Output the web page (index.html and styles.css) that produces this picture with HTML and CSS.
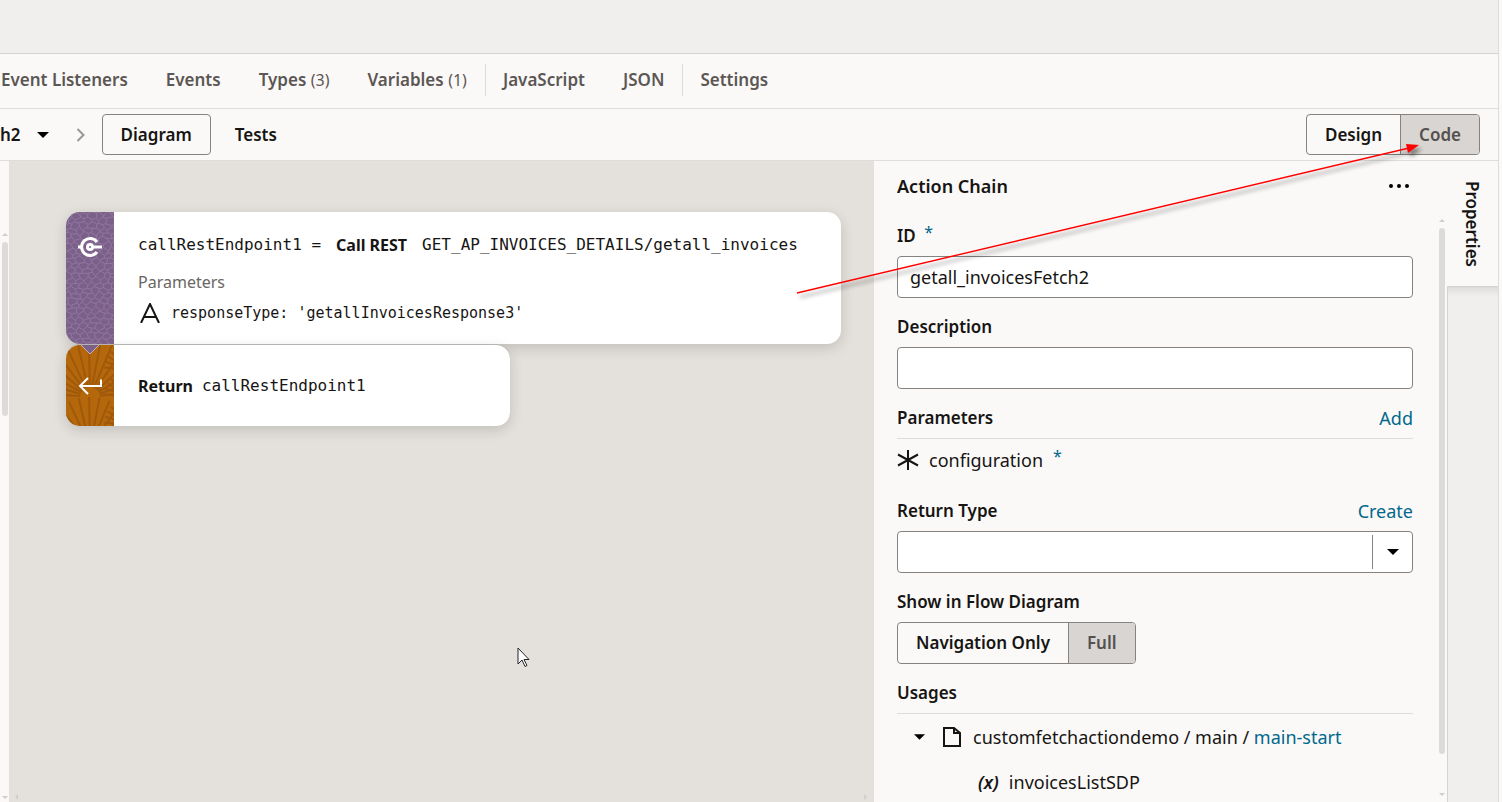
FILE: index.html
```html
<!DOCTYPE html>
<html lang="en">
<head>
<meta charset="utf-8">
<title>Action Chain</title>
<link rel="stylesheet" href="styles.css">
</head>
<body>
<div class="app">
  <header class="topbar"></header>
  <nav class="tabs">
    <a class="tab" href="#">Event Listeners</a>
    <a class="tab" href="#">Events</a>
    <a class="tab" href="#">Types <span class="count">(3)</span></a>
    <a class="tab" href="#">Variables <span class="count">(1)</span></a>
    <span class="divider"></span>
    <a class="tab" href="#">JavaScript</a>
    <a class="tab" href="#">JSON</a>
    <span class="divider"></span>
    <a class="tab" href="#">Settings</a>
  </nav>
  <div class="toolbar">
    <button class="crumb">h2<svg width="12" height="6" viewBox="0 0 12 6"><path d="M0 0h12L6 6z"/></svg></button>
    <svg class="chevron" width="10" height="14" viewBox="0 0 10 14"><path d="M1.500 1l6 6-6 6"/></svg>
    <button class="btn outlined">Diagram</button>
    <button class="btn plain">Tests</button>
    <div class="group mode">
      <button class="btn">Design</button><button class="btn selected">Code</button>
    </div>
  </div>
  <main class="main">
    <div class="gutter">
      <svg class="tri" width="6" height="3" viewBox="0 0 6 3"><path d="M0 3h6L3 0z"/></svg>
      <span class="thumb"></span>
      <svg class="tri end" width="6" height="3" viewBox="0 0 6 3"><path d="M0 0h6L3 3z"/></svg>
    </div>
    <section class="canvas">
      <div class="flow">
        <article class="card rest">
          <div class="strip">
            <svg class="texture" width="48" height="132" id="cells"></svg>
            <svg class="glyph" width="24" height="24" viewBox="0 0 24 24"><path d="M19 7A8.500 8.500 0 1 0 19 17"/><path d="M0 12h4M15 12h9"/><circle cx="12" cy="12" r="2.500"/></svg>
          </div>
          <div class="body">
            <p class="line"><code>callRestEndpoint1 =</code><b>Call REST</b><code>GET_AP_INVOICES_DETAILS/getall_invoices</code></p>
            <p class="sub">Parameters</p>
            <p class="param"><svg width="20" height="20" viewBox="0 0 20 20"><path d="M1 20L10 1l9 19M4 14h12"/></svg><code>responseType: 'getallInvoicesResponse3'</code></p>
          </div>
        </article>
        <article class="card return">
          <div class="strip"><svg class="texture" width="48" height="81" id="fans"></svg>
            <svg class="notch" width="20" height="10" viewBox="0 0 20 10"><path d="M0 -1l10 10L20 -1"/></svg>
            <svg class="glyph" width="24" height="24" viewBox="0 0 24 24"><path d="M23 5.500V12H2M10 4l-8 8 8 8"/></svg>
          </div>
          <div class="body"><p class="line"><b>Return</b><code>callRestEndpoint1</code></p></div>
        </article>
      </div>
      <svg class="pointer" width="13" height="21" viewBox="0 0 13 21"><path d="M1 1v16l4-4 3 6.500 2-1-3-6h5z"/></svg>
      <div class="hscroll"><svg width="3" height="6" viewBox="0 0 3 6"><path d="M3 0v6L0 3z"/></svg><svg width="3" height="6" viewBox="0 0 3 6"><path d="M0 0v6l3-3z"/></svg></div>
    </section>
    <aside class="panel">
      <div class="fields">
        <div class="head"><h2>Action Chain</h2><button class="more" aria-label="More"><svg width="20" height="4" viewBox="0 0 20 4"><circle cx="2" cy="2" r="2"/><circle cx="10" cy="2" r="2"/><circle cx="18" cy="2" r="2"/></svg></button></div>
        <div class="field"><label for="id">ID <span class="req">*</span></label><input id="id" type="text" value="getall_invoicesFetch2"></div>
        <div class="field"><label for="desc">Description</label><input id="desc" type="text"></div>
        <div class="head ruled"><h3>Parameters</h3><a href="#">Add</a></div>
        <p class="config"><svg width="22" height="20" viewBox="0 0 22 20"><path d="M11 0v20M1 4.500l20 11M21 4.500l-20 11"/></svg>configuration <span class="req">*</span></p>
        <div class="field">
          <div class="head"><label for="rt">Return Type</label><a href="#">Create</a></div>
          <div class="select"><select id="rt"><option></option></select><span class="arrow"><svg width="12" height="6" viewBox="0 0 12 6"><path d="M0 0h12L6 6z"/></svg></span></div>
        </div>
        <div class="field"><h3>Show in Flow Diagram</h3><div class="group"><button class="btn">Navigation Only</button><button class="btn selected">Full</button></div></div>
        <div class="head ruled"><h3>Usages</h3></div>
        <p class="tree"><svg width="11" height="6" viewBox="0 0 12 6"><path d="M0 0h12L6 6z"/></svg><svg class="doc" width="18" height="20" viewBox="0 0 18 20"><path d="M1 1h10l6 5v13H1zM11 1v5h6"/></svg><span>customfetchactiondemo / main / <a href="#">main-start</a></span></p>
        <p class="tree leaf"><i>(x)</i>invoicesListSDP</p>
      </div>
      <div class="scroll">
        <svg class="tri" width="6" height="3" viewBox="0 0 6 3"><path d="M0 3h6L3 0z"/></svg>
        <span class="thumb"></span>
        <svg class="tri" width="6" height="3" viewBox="0 0 6 3"><path d="M0 0h6L3 3z"/></svg>
      </div>
    </aside>
    <div class="rail"><button class="vtab">Properties</button><div class="railfill"></div></div>
  </main>
  <svg class="callout" width="640" height="170" viewBox="0 0 640 170"><path class="shaft" d="M7 158L619 13"/><path class="tip" d="M629 10l-11 8-2-9z"/></svg>
</div>
<script src="textures.js"></script>
</body>
</html>
```
FILE: textures.js
```js
// Decorative textures for the action card strips.
var NS = "http://www.w3.org/2000/svg";
function stroke(svg, d, color, width) {
  var p = document.createElementNS(NS, "path");
  p.setAttribute("d", d);
  p.setAttribute("fill", "none");
  p.setAttribute("stroke", color);
  p.setAttribute("stroke-width", width);
  svg.appendChild(p);
}
var seed = 7;
function rnd() { seed = (seed * 16807) % 2147483647; return seed / 2147483647; }

// Irregular honeycomb of small cells with lighter seams.
var cells = document.getElementById("cells"), pts = [], r, c;
for (r = 0; r < 32; r++) {
  pts[r] = [];
  for (c = 0; c < 16; c++) {
    pts[r][c] = [c * 4 - 4 + rnd() * 3, r * 5 - 5 + ((r + c) % 2 ? 1 : -1) + rnd() * 3];
  }
}
var d = "";
for (r = 0; r < 31; r++) for (c = 0; c < 15; c++) {
  d += "M" + pts[r][c] + "L" + pts[r][c + 1];
  if ((r + c) % 2) d += "M" + pts[r][c] + "L" + pts[r + 1][c];
}
stroke(cells, d, "#9177a0", 1);

// Overlapping fans of rays.
var fans = document.getElementById("fans");
[[24, 52, 58], [24, 102, 50], [66, 25, 28], [66, 52, 28], [66, 80, 28]].forEach(function (f) {
  var s = "";
  for (var a = 5; a < 180; a += 12) {
    var t = a * Math.PI / 180;
    s += "M" + (f[0] - Math.cos(t) * 10) + " " + (f[1] - Math.sin(t) * 10) +
         "L" + (f[0] - Math.cos(t) * f[2]) + " " + (f[1] - Math.sin(t) * f[2]);
  }
  stroke(fans, s, "#9f590a", 2);
});
```
FILE: styles.css
```css
* { box-sizing: border-box; }
body { margin: 0; font: 18px/24px "Noto Sans", "Open Sans", sans-serif; color: #161513; background: #fbf9f8; }
h2, h3, p { margin: 0; font-size: 18px; font-weight: 400; }
a { color: #00688c; text-decoration: none; }
button, input, select { font: inherit; color: inherit; }
button { background: none; border: 0; padding: 0; }
code { font-family: "DejaVu Sans Mono", monospace; font-size: 16px; }
.app { position: relative; height: 100vh; display: flex; flex-direction: column; margin-right: 3px; border-right: 1px solid #dddcda; overflow: hidden; }
.topbar { height: 54px; flex: none; background: #f0efed; border-bottom: 1px solid #d5d3d1; }
.tabs { height: 55px; flex: none; display: flex; align-items: center; border-bottom: 1px solid #dfdddb; padding: 0 0 2px 1px; }
.tab, .crumb, .btn, .vtab, h3, label { font-size: 17px; font-weight: 600; }
.tab { color: #5b5754; margin-right: 38px; white-space: nowrap; }
.count { font-size: 16px; font-weight: 400; }
.divider { width: 1px; height: 32px; background: #dddbd9; margin: 0 17px 0 -20px; }
.toolbar { height: 52px; flex: none; display: flex; align-items: center; border-bottom: 1px solid #dfdddb; padding-right: 18px; }
.crumb { display: flex; align-items: center; gap: 16px; }
.chevron { margin: 0 16px 0 27px; fill: none; stroke: #999693; stroke-width: 2; }
.btn { height: 41px; padding: 0 18px; white-space: nowrap; }
.outlined { border: 1px solid #85827f; border-radius: 4px; }
.plain { padding: 0 24px; }
.group { display: flex; align-self: flex-start; width: max-content; border: 1px solid #85827f; border-radius: 4px; overflow: hidden; }
.group .btn { height: 40px; }
.toolbar .group { margin-left: auto; align-self: center; }
.toolbar .group .btn { height: 39px; }
.selected { background: #d9d5d3; color: #55514e; border-left: 1px solid #85827f; }
.main { flex: 1; min-height: 0; display: flex; }
.gutter { width: 9px; flex: none; display: flex; flex-direction: column; align-items: flex-end; padding: 72px 1px 3px 0; }
.tri, .hscroll svg { fill: #d0cecc; flex: none; }
.thumb { width: 6px; background: #dcdbd9; border-radius: 3px; }
.gutter .thumb { height: 174px; margin-top: 6px; }
.gutter .end { margin-top: auto; }
.canvas { position: relative; flex: 1; min-width: 0; background: #e4e1dc; display: flex; flex-direction: column; padding: 51px 0 2px 57px; }
.flow { display: flex; flex-direction: column; align-items: flex-start; }
.card { display: flex; background: #fff; border-radius: 14px; box-shadow: 0 4px 14px rgba(0, 0, 0, .15); }
.rest { min-width: 775px; }
.return { min-width: 444px; margin-top: 1px; box-shadow: 0 4px 14px rgba(0, 0, 0, .15), 0 -1px 0 #bfbbb8; }
.strip { position: relative; width: 48px; flex: none; border-radius: 14px 0 0 14px; overflow: hidden; display: flex; justify-content: center; }
.rest .strip { background: #7b6089; padding-top: 23px; }
.return .strip { background: #b5670c; padding-top: 29px; }
.texture { position: absolute; inset: 0; }
.glyph { position: relative; fill: none; stroke: #fff; stroke-width: 3; }
.return .glyph { stroke-width: 2; }
.notch { position: absolute; top: 0; left: 14px; fill: #7b6089; stroke: #bfb3bd; stroke-width: 1; }
.body { padding: 21px 24px 19px 24px; }
.return .body { padding: 29px 24px 28px; }
.line { display: flex; gap: 15px; white-space: nowrap; }
.return .line { gap: 9px; }
.line b { font-size: 16px; }
.sub { font-size: 16px; color: #6a6663; margin-top: 13px; }
.param { display: flex; align-items: center; gap: 11px; margin: 7px 0 0 2px; height: 24px; }
.param code { font-size: 15px; }
.param svg, .config svg, .doc { fill: none; stroke: #161513; stroke-width: 2; }
.hscroll { margin-top: auto; display: flex; justify-content: space-between; padding: 0 7px 0 0; margin-left: -51px; }
.pointer { position: absolute; left: 508px; top: 486px; fill: #fff; stroke: #25242b; }
.panel { width: 573px; flex: none; display: flex; }
.fields { flex: 1; padding: 13px 0 0 23px; display: flex; flex-direction: column; }
.head { display: flex; justify-content: space-between; align-items: center; }
h3, label { display: block; }
h2 { font-weight: 600; }
.more { display: flex; padding: 4px; }
.field { display: flex; flex-direction: column; gap: 8px; }
.head + .field { margin-top: 26px; }
.field + .field { margin-top: 17px; }
.req { color: #00688c; font-weight: 400; font-size: 16px; position: relative; top: -4px; margin-left: 4px; }
input, select { height: 42px; width: 100%; background: #fff; border: 1px solid #85827f; border-radius: 4px; padding: 0 12px; }
.ruled { padding-bottom: 8px; border-bottom: 1px solid #dfdddb; margin-top: 17px; }
.config { display: flex; align-items: center; gap: 10px; margin: 9px 0 27px; }
.config .req { margin-left: 0; }
.select { position: relative; }
select { appearance: none; display: block; }
.arrow { position: absolute; right: 0; top: 4px; bottom: 4px; width: 41px; border-left: 1px solid #85827f; display: flex; align-items: center; justify-content: center; pointer-events: none; }
.tree { display: flex; align-items: center; margin: 11px 0 0 17px; white-space: nowrap; }
.doc { margin: 0 12px 0 18px; }
.leaf { margin: 21px 0 0 81px; gap: 10px; }
.leaf i { font-weight: 600; }
.scroll { width: 34px; flex: none; display: flex; flex-direction: column; align-items: flex-end; padding: 58px 2px 6px 0; }
.scroll .thumb { flex: 1; margin: 6px 0 39px; }
.rail { width: 51px; flex: none; display: flex; flex-direction: column; }
.vtab { height: 125px; writing-mode: vertical-rl; text-align: center; padding-right: 2px; }
.railfill { flex: 1; background: #f0efed; border: solid #d5d3d1; border-width: 1px 0 0 1px; box-shadow: inset 0 10px 10px -8px rgba(0, 0, 0, .12); }
.callout { position: absolute; left: 790px; top: 135px; pointer-events: none; filter: drop-shadow(3px 4px 2px rgba(0, 0, 0, .45)); }
.shaft { stroke: #f00; stroke-width: 1.4; }
.tip { fill: #f00; }
```
